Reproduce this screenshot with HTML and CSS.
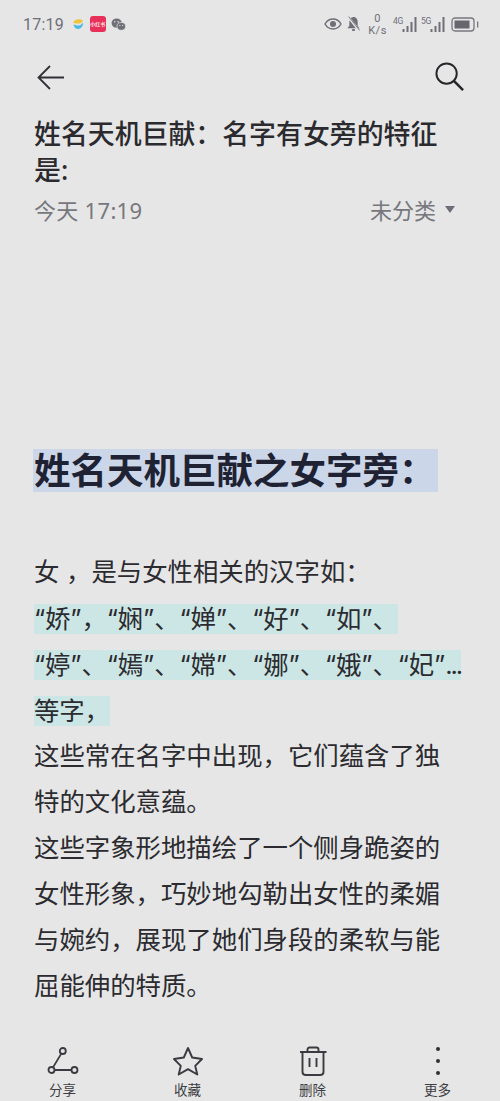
FILE: index.html
```html
<!DOCTYPE html>
<html lang="zh">
<head>
<meta charset="utf-8">
<title>笔记</title>
<link rel="stylesheet" href="styles.css">
</head>
<body>
<div class="page">
  <div class="status">
    <div class="status-left">
      <span class="time">17:19</span>
      <svg class="ic-app" viewBox="0 0 12 12"><path d="M1 5C2 1.500 7 0 11 2.500C10 5 8 5.500 6 5.500C4 5.500 2 5 1 5Z" fill="#eec53a"/><path d="M1.500 6.500C3 6.500 5 8 7 7.500C9 7 10 6 11 4.500C11.500 8 9 11 6 11C3.500 11 2 9 1.500 6.500Z" fill="#4cb8e6"/></svg>
      <span class="red-app">小红书</span>
      <svg class="ic-wechat" viewBox="0 0 16 14"><ellipse cx="6" cy="5.500" rx="5.500" ry="5" fill="#6f6f78"/><ellipse cx="11" cy="9" rx="4.600" ry="4.200" fill="#6f6f78" stroke="#e6e6e6" stroke-width=".8"/><circle cx="4" cy="4" r=".8" fill="#e6e6e6"/><circle cx="7.600" cy="4" r=".8" fill="#e6e6e6"/><circle cx="9.500" cy="8" r=".6" fill="#e6e6e6"/><circle cx="12.500" cy="8" r=".6" fill="#e6e6e6"/></svg>
    </div>
    <div class="status-right">
      <svg class="ic-eye" viewBox="0 0 18 12"><path d="M1 6C3 2.500 6 1 9 1C12 1 15 2.500 17 6C15 9.500 12 11 9 11C6 11 3 9.500 1 6Z" fill="none" stroke="#6f6f78" stroke-width="1.500"/><circle cx="9" cy="6" r="3" fill="#6f6f78"/></svg>
      <svg class="ic-bell" viewBox="0 0 14 16"><path d="M7 .5C4 .5 2.500 3 2.500 6V10L.5 12.500H13.500L11.500 10V6C11.500 3 10 .5 7 .5Z" fill="#6f6f78"/><rect x="5.500" y="13.500" width="3" height="2" fill="#6f6f78"/><path d="M1 0L13 15" stroke="#e6e6e6" stroke-width="2.500"/><path d="M1.800 0L13.800 15" stroke="#6f6f78" stroke-width="1"/></svg>
      <span class="speed"><span>0</span><span>K/s</span></span>
      <span class="signal"><span class="net">4G</span><svg class="ic-bars" viewBox="0 0 15 15"><path d="M1.500 15V12M5.500 15V9M9.500 15V5M13.500 15V0" stroke="#6f6f78" stroke-width="2" fill="none"/></svg></span>
      <span class="signal"><span class="net">5G</span><svg class="ic-bars" viewBox="0 0 15 15"><path d="M1.500 15V12M5.500 15V9M9.500 15V5M13.500 15V0" stroke="#6f6f78" stroke-width="2" fill="none"/></svg></span>
      <svg class="ic-batt" viewBox="0 0 28 15"><rect x="1" y="1" width="22" height="13" rx="3" fill="none" stroke="#77777f" stroke-width="1.300"/><rect x="3.500" y="3.500" width="15" height="8" fill="#66666e"/><rect x="26" y="4.500" width="1.300" height="6" fill="#77777f"/></svg>
    </div>
  </div>

  <div class="nav">
    <svg class="ic-back" viewBox="0 0 27 25"><path d="M13 1L1.500 12.500L13 24M1.500 12.500H27" fill="none" stroke="#303036" stroke-width="1.800"/></svg>
    <svg class="ic-search" viewBox="0 0 32 32"><circle cx="13" cy="13" r="10.500" fill="none" stroke="#26262b" stroke-width="2"/><path d="M20.500 20.500L30 30" stroke="#26262b" stroke-width="2.600"/></svg>
  </div>

  <h1 class="title">姓名天机巨献：名字有女旁的特征是:</h1>
  <div class="meta">
    <span class="date">今天 17:19</span>
    <span class="category">未分类<i class="caret"></i></span>
  </div>

  <div class="article">
    <h2 class="heading"><span class="hl-blue">姓名天机巨献之女字旁：</span></h2>
    <p class="line">女 ，是与女性相关的汉字如：</p>
    <p class="line"><span class="hl-green">“娇”，“娴”、“婵”、“好”、“如”、</span></p>
    <p class="line"><span class="hl-green">“婷”、“嫣”、“嫦”、“娜”、“娥”、“妃”<span class="dots">...</span></span></p>
    <p class="line"><span class="hl-green">等字，</span></p>
    <p class="para">这些常在名字中出现，它们蕴含了独特的文化意蕴。</p>
    <p class="para">这些字象形地描绘了一个侧身跪姿的女性形象，巧妙地勾勒出女性的柔媚与婉约，展现了她们身段的柔软与能屈能伸的特质。</p>
  </div>

  <div class="toolbar">
    <div class="tool">
      <svg class="tool-ic" viewBox="0 0 32 32"><circle cx="15.800" cy="5" r="3" fill="none" stroke="#3a3a40" stroke-width="1.800"/><circle cx="4.500" cy="24" r="3" fill="none" stroke="#3a3a40" stroke-width="1.800"/><circle cx="27.500" cy="24" r="3" fill="none" stroke="#3a3a40" stroke-width="1.800"/><path d="M14.300 7.600L6 21.400M7.500 24H24.500" stroke="#3a3a40" stroke-width="1.800" fill="none"/></svg>
      <span>分享</span>
    </div>
    <div class="tool">
      <svg class="tool-ic" viewBox="0 0 32 32"><path d="M16 2L20.200 11.500L30 13L23.200 19.800L25.300 28.500L16 23.200L6.700 28.500L8.800 19.800L2 13L11.800 11.500Z" fill="none" stroke="#3a3a40" stroke-width="1.900" stroke-linejoin="round"/></svg>
      <span>收藏</span>
    </div>
    <div class="tool">
      <svg class="tool-ic" viewBox="0 0 32 32"><path d="M3 6H29.500M10.500 6V3.500C10.500 2.300 11.300 1.500 12.500 1.500H19.500C20.700 1.500 21.500 2.300 21.500 3.500V6M5.500 6V26C5.500 28 7 29 9 29H23C25 29 26.500 28 26.500 26V6M12.500 12V21M19.500 12V21" fill="none" stroke="#3a3a40" stroke-width="1.900"/></svg>
      <span>删除</span>
    </div>
    <div class="tool">
      <svg class="tool-ic" viewBox="0 0 32 32"><circle cx="16" cy="3" r="2" fill="#303036"/><circle cx="16" cy="15" r="2" fill="#303036"/><circle cx="16" cy="27" r="2" fill="#303036"/></svg>
      <span>更多</span>
    </div>
  </div>
</div>
</body>
</html>
```
FILE: styles.css
```css
* { box-sizing: border-box; }
html, body { margin: 0; padding: 0; }
body {
  width: 500px;
  height: 1101px;
  overflow: hidden;
  background: #e6e6e6;
  font-family: "Noto Sans", "Noto Sans CJK SC", sans-serif;
  color: #2b2b30;
}
.page { height: 1101px; display: flex; flex-direction: column; }

.status {
  height: 48px;
  padding: 0 21px 0 23px;
  display: flex;
  justify-content: space-between;
  align-items: center;
  color: #6f6f78;
}
.status-left { display: flex; align-items: center; }
.time { font-family: "Roboto", sans-serif; font-size: 16px; letter-spacing: .2px; margin-right: 8px; }
.ic-app { width: 12px; height: 12px; margin-right: 6px; }
.red-app {
  width: 16px; height: 16px; border-radius: 3px;
  background: #e8305a; color: #fbe3e8;
  font-size: 5px; font-weight: 700; line-height: 16px; text-align: center; margin-right: 5px;
  white-space: nowrap; overflow: hidden;
}
.ic-wechat { width: 15px; height: 13px; }
.status-right { display: flex; align-items: center; }
.ic-eye { width: 18px; height: 12px; margin-right: 5px; }
.ic-bell { width: 13px; height: 16px; margin-right: 9px; }
.speed {
  display: flex; flex-direction: column; align-items: center;
  font-family: "Roboto", sans-serif; font-size: 11px; line-height: 12px; letter-spacing: .5px;
  margin-right: 3px; margin-top: 2px; width: 17px;
}
.signal { display: flex; align-items: flex-start; margin-left: 4px; }
.net { font-family: "Roboto", sans-serif; font-size: 8.500px; line-height: 8px; width: 9px; white-space: nowrap; letter-spacing: -.4px; }
.ic-bars { width: 15px; height: 15px; }
.ic-batt { width: 28px; height: 15px; margin-left: 6px; }

.nav {
  height: 60px;
  padding: 0 35px 0 37px;
  display: flex;
  justify-content: space-between;
  align-items: center;
}
.ic-back { width: 27px; height: 25px; margin-top: -1px; }
.ic-search { width: 31px; height: 31px; margin-top: -3px; }

.title {
  margin: 8px 40px 0 34px;
  font-size: 26.900px;
  line-height: 36px;
  font-weight: 500;
  color: #2a2a2f;
  word-break: break-all;
}
.meta {
  margin-top: 4px;
  padding: 0 45px 0 34px;
  display: flex;
  justify-content: space-between;
  align-items: center;
  height: 34px;
  font-size: 22px;
  color: #77777d;
}
.date { letter-spacing: .3px; }
.category { display: flex; align-items: center; }
.caret {
  margin-left: 9px;
  width: 0; height: 0;
  border-left: 5px solid transparent;
  border-right: 5px solid transparent;
  border-top: 7px solid #6d6d75;
}

.article { margin-top: 223px; padding: 0 34px; }
.heading { margin: 0 0 56px; font-size: 36.500px; font-weight: 700; color: #1e2233; line-height: 43px; }
.hl-blue { display: inline-block; margin-left: -1px; padding: 0 2px 0 1px; background: #cbd6e8; line-height: 43px; white-space: nowrap; }
.line, .para { margin: 0; font-size: 25.400px; line-height: 46px; color: #2b2b30; }
.para { margin-right: 10px; }
.hl-green {
  display: inline-block;
  vertical-align: top;
  margin: 10px 0 6px;
  line-height: 30px;
  background: #cce6e5;
  white-space: nowrap;
  letter-spacing: -.1px;
  font-family: "Inter", "Noto Sans CJK SC", sans-serif;
}
.dots { letter-spacing: -2px; }

.toolbar {
  margin-top: auto;
  display: grid;
  grid-template-columns: repeat(4, 1fr);
  padding: 0 0 2px;
}
.tool { display: flex; flex-direction: column; align-items: center; font-size: 13.500px; line-height: 18px; color: #3c3c42; }
.tool-ic { width: 32px; height: 32px; margin-bottom: 3px; }
```
